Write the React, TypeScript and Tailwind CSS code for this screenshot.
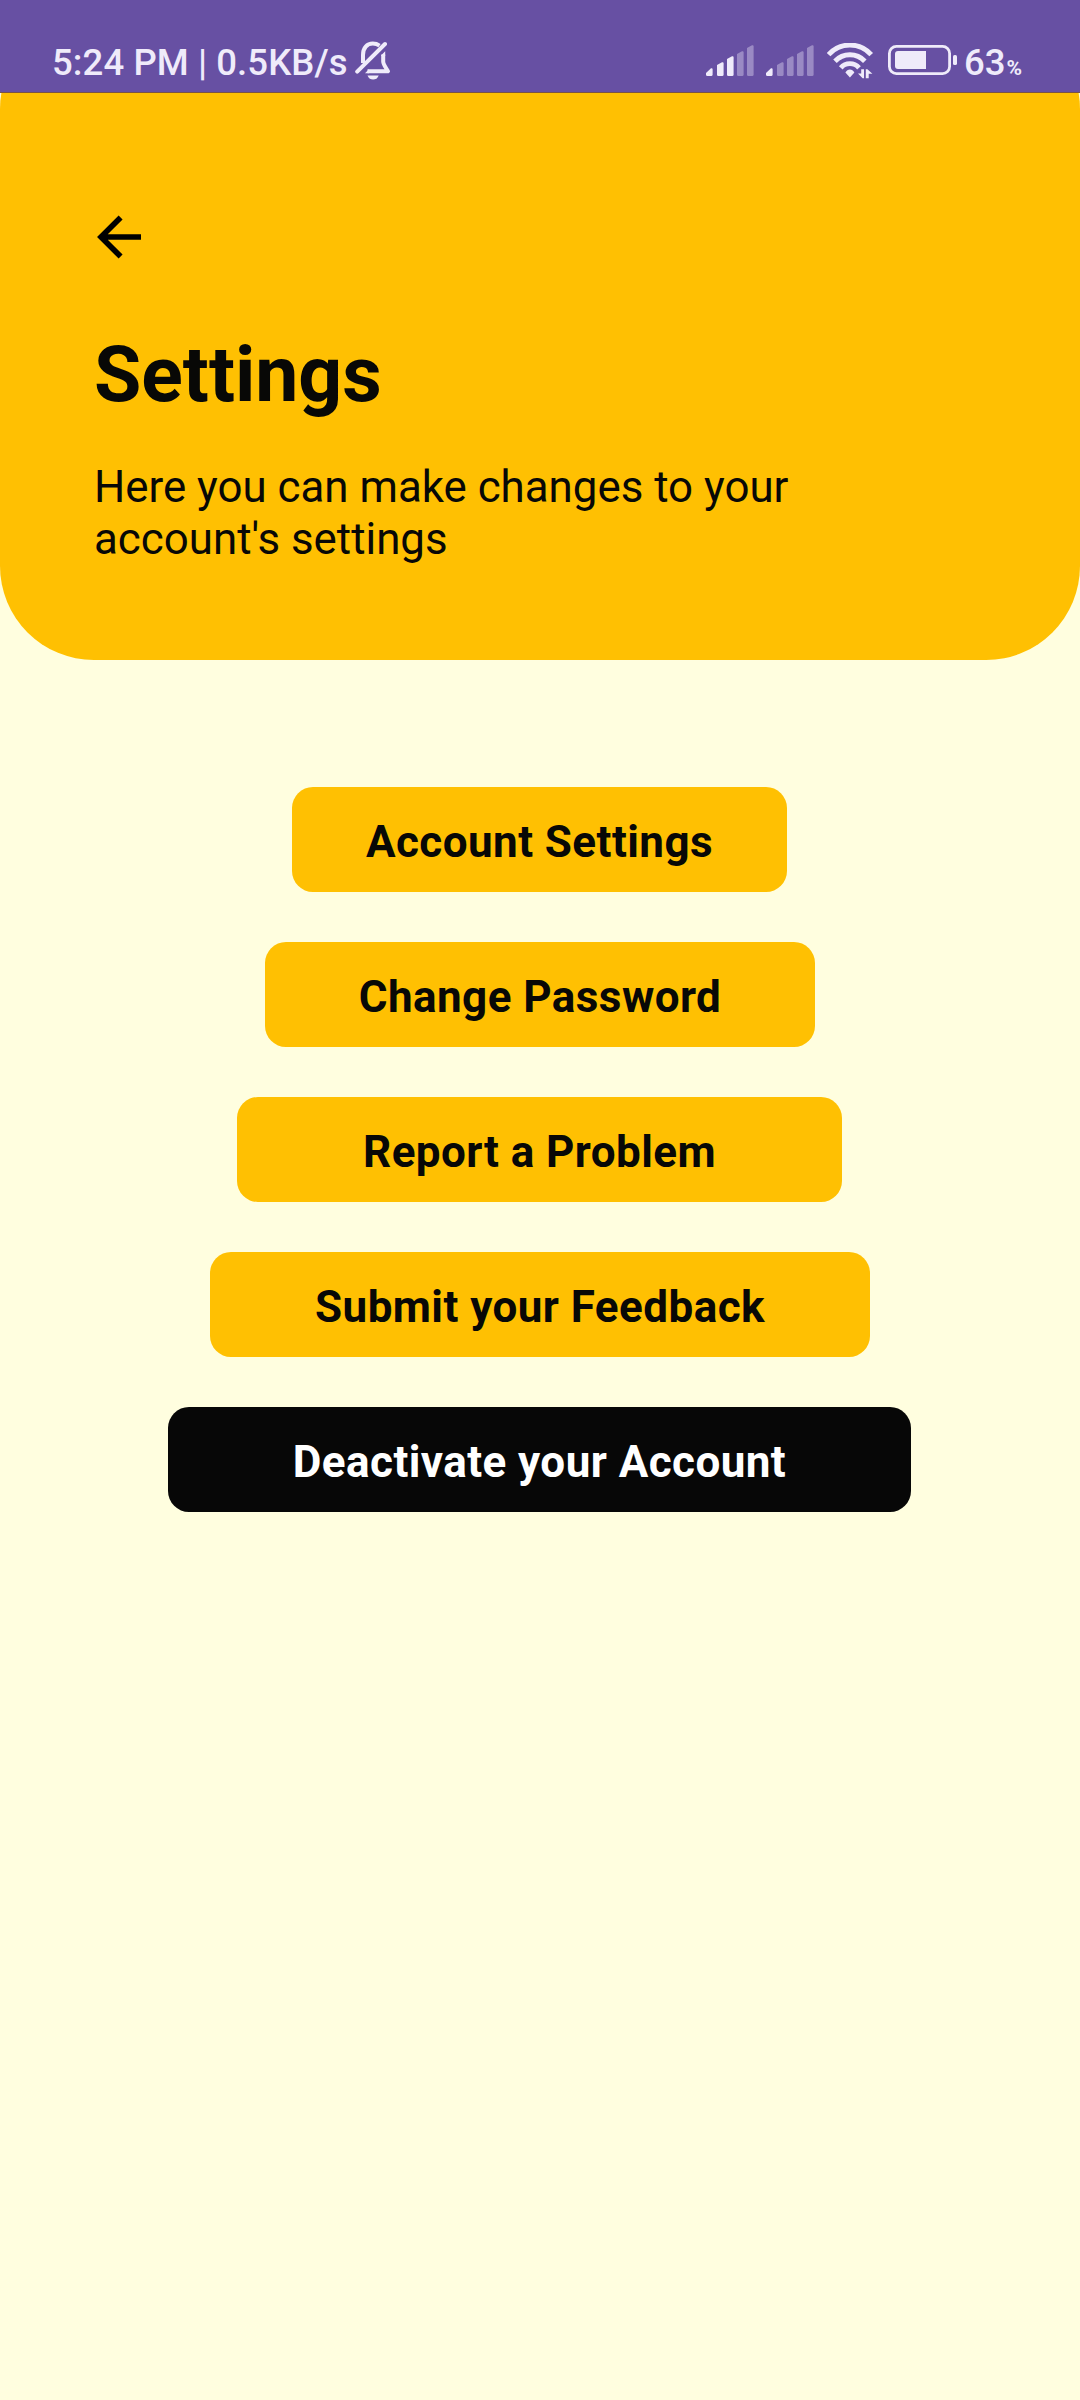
import React from "react";

const signalBars = [
  { x: 0, top: 23, slant: 5 },
  { x: 11, top: 17, slant: 3 },
  { x: 21, top: 11, slant: 3 },
  { x: 31, top: 6, slant: 3 },
  { x: 41, top: 0, slant: 3 },
];

function Signal({ active }: { active: number }) {
  return (
    <svg width="48" height="31" viewBox="0 0 48 31" className="mt-[2px] shrink-0">
      {signalBars.map((b, i) => (
        <path
          key={b.x}
          fill="#efebfa"
          opacity={i < active ? 1 : 0.38}
          d={`M${b.x} ${b.top + b.slant} L${b.x + 5} ${b.top + 0.3} Q${b.x + 6.6} ${b.top - 0.3} ${b.x + 6.6} ${b.top + 1.5} V29.5 Q${b.x + 6.6} 31 ${b.x + 5.2} 31 H${b.x + 1.4} Q${b.x} 31 ${b.x} 29.5 Z`}
        />
      ))}
    </svg>
  );
}

function BellOff() {
  return (
    <svg width="36" height="39" viewBox="0 0 36 39" fill="none" stroke="#efebfa" strokeWidth="4" className="shrink-0">
      <path d="M2.2 30.6 L30 3" strokeLinecap="round" />
      <path d="M8 22 V14 C8 7 12 2.6 17.8 2.6 C20.5 2.6 22.5 3.2 24.5 4.6" />
      <path d="M28.2 13.4 V20.5 C28.2 23.5 30.5 26 33 30.2 H12.5" strokeLinejoin="round" />
      <path d="M26.2 14.2 L30.2 10.2 V15 H26.2 Z M10 32.2 L14 28.2 V32.2 Z" fill="#efebfa" stroke="none" />
      <path d="M12.5 34.4 H23.7 C22.7 37.3 20.5 38.5 18.1 38.5 C15.7 38.5 13.5 37.3 12.5 34.4 Z" fill="#efebfa" stroke="none" />
    </svg>
  );
}

function Wifi() {
  return (
    <svg width="47" height="36" viewBox="0 0 47 36" fill="none" stroke="#efebfa" strokeWidth="4.9" className="ml-[13px] shrink-0">
      <path d="M1.6 11.6 A28.5 28.5 0 0 1 44.2 11.6" />
      <path d="M8 18.2 A20.6 20.6 0 0 1 37.8 18.2" />
      <path d="M13.8 24.8 A12 12 0 0 1 32 24.8" />
      <path d="M18.4 29.6 C20.5 25.6 25.3 25.6 27.4 29.6 L22.9 34.4 Z" fill="#efebfa" strokeWidth="0" />
      <path
        d="M34.2 26.2 H37 V35.2 H35.6 L31 30.6 H34.2 Z M38.8 35.2 V26.2 H40.4 L45.4 30.8 H41.7 V35.2 Z"
        fill="#efebfa"
        stroke="none"
      />
    </svg>
  );
}

function Battery() {
  return (
    <svg width="69" height="30" viewBox="0 0 69 30" className="ml-[14px] mt-[2px] shrink-0">
      <rect x="1.4" y="1.4" width="60.2" height="27.2" rx="7" fill="none" stroke="#efebfa" strokeWidth="2.8" />
      <path d="M38 6 H10 Q7 6 7 9 V21 Q7 24 10 24 H38 Z" fill="#efebfa" />
      <rect x="65" y="10" width="4" height="10" rx="1.6" fill="#efebfa" />
    </svg>
  );
}

function StatusBar() {
  return (
    <div className="flex h-[93px] items-start justify-between border-b border-[#7b5345] bg-[#6750a3] pl-[52px] pr-[58px] pt-[41px] text-[36.5px] font-medium leading-[43px] text-[#efebfa]">
      <div className="flex">
        <span className="w-[303px] whitespace-nowrap tracking-[0.09px]">5:24 PM | 0.5KB/s</span>
        <BellOff />
      </div>
      <div className="flex items-start pt-[2px]">
        <Signal active={3} />
        <div className="ml-3 flex">
          <Signal active={1} />
        </div>
        <Wifi />
        <Battery />
        <div className="-mt-[2px] ml-[7px] flex items-baseline">
          <span>63</span>
          <span className="ml-px text-[21px] font-bold leading-none">%</span>
        </div>
      </div>
    </div>
  );
}

const actions = [
  { label: "Account Settings", style: "w-[495px] -ml-px bg-[#ffc002] text-[#080806]" },
  { label: "Change Password", style: "w-[550px] bg-[#ffc002] text-[#080806]" },
  { label: "Report a Problem", style: "w-[605px] -ml-px bg-[#ffc002] text-[#080806]" },
  { label: "Submit your Feedback", style: "w-[660px] bg-[#ffc002] text-[#080806]" },
  { label: "Deactivate your Account", style: "w-[743px] -ml-px bg-[#070707] text-white" },
];

export default function App() {
  return (
    <div className="flex h-[2400px] w-[1080px] flex-col bg-[#fffedf] font-['Roboto',sans-serif]">
      <StatusBar />
      <header className="h-[567px] shrink-0 overflow-hidden">
        <div className="-mt-[78px] h-[645px] rounded-[94px] bg-[#ffc002] pl-[94px] pt-[189px]">
          <button aria-label="Back" className="block">
            <svg width="50" height="66" viewBox="0 0 50 66" fill="none" stroke="#000" strokeWidth="5.6">
              <path d="M47 33 H8 M26.6 13.4 L7 33 L26.6 52.6" />
            </svg>
          </button>
          <h1 className="mt-[60px] text-[76.9px] font-bold leading-[90px] text-[#080806]">Settings</h1>
          <p className="mt-[41px] w-[760px] text-[43.85px] leading-[52px] text-[#080806]">
            Here you can make changes to your account's settings
          </p>
        </div>
      </header>
      <main className="flex flex-col items-center gap-[50px] pt-[127px]">
        {actions.map((a) => (
          <button
            key={a.label}
            className={`h-[105px] rounded-[21px] pt-1 text-[44px] font-bold leading-[52px] tracking-[0.44px] ${a.style}`}
          >
            {a.label}
          </button>
        ))}
      </main>
    </div>
  );
}
